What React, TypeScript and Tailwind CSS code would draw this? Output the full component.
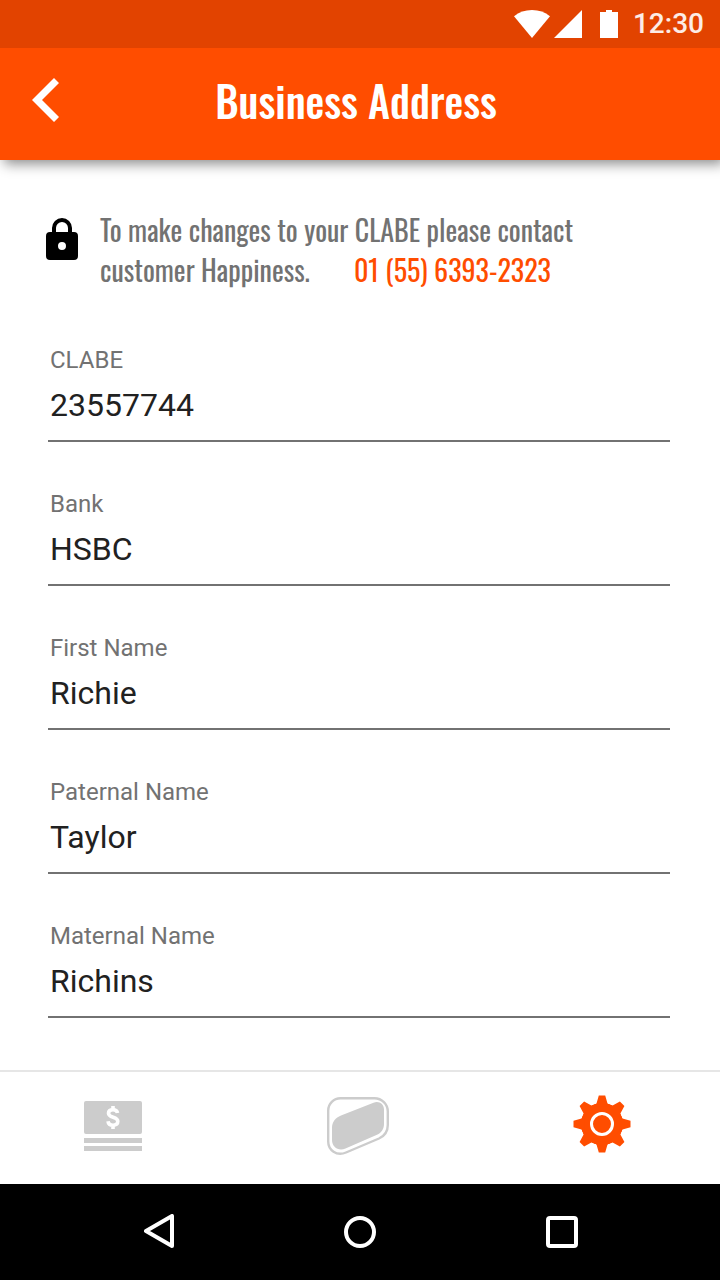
import React from 'react';

const fields = [
  { id: 'clabe', label: 'CLABE', value: '23557744' },
  { id: 'bank', label: 'Bank', value: 'HSBC' },
  { id: 'first-name', label: 'First Name', value: 'Richie' },
  { id: 'paternal-name', label: 'Paternal Name', value: 'Taylor' },
  { id: 'maternal-name', label: 'Maternal Name', value: 'Richins' },
];

function StatusBar() {
  return (
    <div className="relative z-20 flex h-12 items-center justify-end bg-[#e24300] pr-4 text-white">
      <svg className="mr-1" width="36" height="28" viewBox="0 0 36 28" fill="currentColor" aria-hidden="true">
        <path d="M0 6.2C5 2.2 11 0 18 0s13 2.2 18 6.2L18 28z" />
      </svg>
      <svg className="mr-[18px]" width="28" height="28" viewBox="0 0 28 28" fill="currentColor" aria-hidden="true">
        <path d="M28 0v28H0z" />
      </svg>
      <svg className="mr-[15px]" width="18" height="28" viewBox="0 0 18 28" fill="currentColor" aria-hidden="true">
        <path d="M6 0h6v2h6v26H0V2h6z" />
      </svg>
      <span className="text-[28px] leading-8 font-medium text-white/90">12:30</span>
    </div>
  );
}

function Header() {
  return (
    <header className="z-10 flex h-28 items-center bg-[#ff4d00] pr-[68px] pb-2 pl-8 text-white shadow-[4px_4px_12px_0px_rgba(0,0,0,0.45)]">
      <button type="button" aria-label="Back" className="shrink-0">
        <svg width="28" height="44" viewBox="0 0 28 44" fill="currentColor" aria-hidden="true">
          <path d="M22 0l5 5-17 17 17 17-5 5L0 22z" />
        </svg>
      </button>
      <h1 className="flex-1 text-center font-['Oswald','Liberation_Sans_Narrow','Liberation_Sans',sans-serif] text-[42px] leading-[56px] font-medium whitespace-nowrap">
        Business Address
      </h1>
    </header>
  );
}

function Notice() {
  return (
    <section className="flex gap-[22px] pr-8 pl-[46px]">
      <svg className="mt-2 shrink-0" width="32" height="42" viewBox="0 0 32 42" aria-hidden="true">
        <path
          fillRule="evenodd"
          d="M6 14v-4a10 10 0 0 1 20 0v4h2a4 4 0 0 1 4 4v20a4 4 0 0 1-4 4H4a4 4 0 0 1-4-4V18a4 4 0 0 1 4-4zm4 0h12v-4a6 6 0 0 0-12 0zm6 10a4 4 0 1 0 0 8 4 4 0 0 0 0-8z"
        />
      </svg>
      <p className="font-['Oswald','Liberation_Sans_Narrow','Liberation_Sans',sans-serif] text-[28px] leading-10 text-[#727272]">
        To make changes to your CLABE please contact
        <br />
        customer Happiness.
        <a href="tel:015563932323" className="ml-11 text-[#ff4d00]">
          01 (55) 6393-2323
        </a>
      </p>
    </section>
  );
}

function Field({ id, label, value }: { id: string; label: string; value: string }) {
  return (
    <div className="flex flex-col">
      <label htmlFor={id} className="pl-[2px] text-2xl leading-8 text-[#727272]">
        {label}
      </label>
      <input
        id={id}
        type="text"
        defaultValue={value}
        className="h-[66px] w-full border-b-2 border-[#727272] pb-[6px] pl-[2px] text-[32px] text-[#212121] outline-none"
      />
    </div>
  );
}

function TabBar() {
  return (
    <nav aria-label="Sections" className="flex h-[114px] items-center justify-between border-t-2 border-[#e6e6e6] pr-[89px] pb-1 pl-[84px]">
      <a href="#payments" aria-label="Payments" className="text-[#cccccc]">
        <svg width="58" height="50" viewBox="0 0 58 50" fill="currentColor" aria-hidden="true">
          <rect width="58" height="33" rx="2" />
          <rect y="37" width="58" height="5" />
          <rect y="45" width="58" height="5" />
          <path
            d="M33.500 12C33.200 9.700 31.500 8.700 29 8.700c-2.700 0-4.500 1.200-4.500 3.600 0 5 9.300 3 9.300 8 0 2.500-1.900 3.900-4.800 3.900s-4.700-1.300-5-4M29 5v3.500M29 24.500V28"
            fill="none"
            stroke="#fff"
            strokeWidth="3.600"
          />
        </svg>
      </a>
      <a href="#card" aria-label="Card" className="text-[#cccccc]">
        <svg width="62" height="58" viewBox="0 0 62 58" aria-hidden="true">
          <path
            d="M13.500 1.200H47.500A13.300 13.300 0 0 1 60.800 14.500V28C60.800 34.500 57.500 39 52 41.500L19 55.500C9.500 59.500 1.200 53 1.200 44.500V13.500A12.300 12.300 0 0 1 13.500 1.200z"
            fill="none"
            stroke="currentColor"
            strokeWidth="2.400"
          />
          <path
            d="M14 18.500L46.500 5.700C52 3.500 57 7 57 12.500V27C57 32 54.500 35.800 50 37.800L18.500 51.500C11.500 54.500 5 50 5 43V31C5 25 8.500 20.700 14 18.500z"
            fill="currentColor"
          />
        </svg>
      </a>
      <a href="#settings" aria-label="Settings" aria-current="page" className="pb-1 text-[#ff4d00]">
        <svg width="58" height="58" viewBox="0 0 58 58" aria-hidden="true">
          <g fill="currentColor">
            <circle cx="29" cy="29" r="21" />
            {[0, 45, 90, 135, 180, 225, 270, 315].map((angle) => (
              <path
                key={angle}
                d="M25.800 0.500H32.200L34.500 8.500L40 11.500H18L23.500 8.500z"
                transform={`rotate(${angle} 29 29)`}
              />
            ))}
          </g>
          <circle cx="29" cy="29" r="10.500" fill="none" stroke="#fff" strokeWidth="3" />
        </svg>
      </a>
    </nav>
  );
}

function SystemBar() {
  return (
    <div className="flex h-24 items-center justify-between bg-black pr-[142px] pl-36 text-white">
      <button type="button" aria-label="System back">
        <svg width="30" height="36" viewBox="0 0 30 36" fill="none" stroke="currentColor" strokeWidth="4" strokeLinejoin="round" aria-hidden="true">
          <path d="M28 2v30L2 17z" />
        </svg>
      </button>
      <button type="button" aria-label="Home">
        <svg width="32" height="32" viewBox="0 0 32 32" fill="none" stroke="currentColor" strokeWidth="4" aria-hidden="true">
          <circle cx="16" cy="16" r="14" />
        </svg>
      </button>
      <button type="button" aria-label="Recent apps">
        <svg width="32" height="32" viewBox="0 0 32 32" fill="none" stroke="currentColor" strokeWidth="4" aria-hidden="true">
          <rect x="2" y="2" width="28" height="28" rx="2" />
        </svg>
      </button>
    </div>
  );
}

export default function App() {
  return (
    <div className="flex min-h-screen flex-col bg-white font-['Roboto',sans-serif]">
      <StatusBar />
      <Header />
      <main className="flex-1 pt-[50px] pb-[52px]">
        <Notice />
        <form className="mt-[54px] flex flex-col gap-[46px] pr-[50px] pl-12">
          {fields.map((field) => (
            <Field key={field.id} {...field} />
          ))}
        </form>
      </main>
      <TabBar />
      <SystemBar />
    </div>
  );
}
